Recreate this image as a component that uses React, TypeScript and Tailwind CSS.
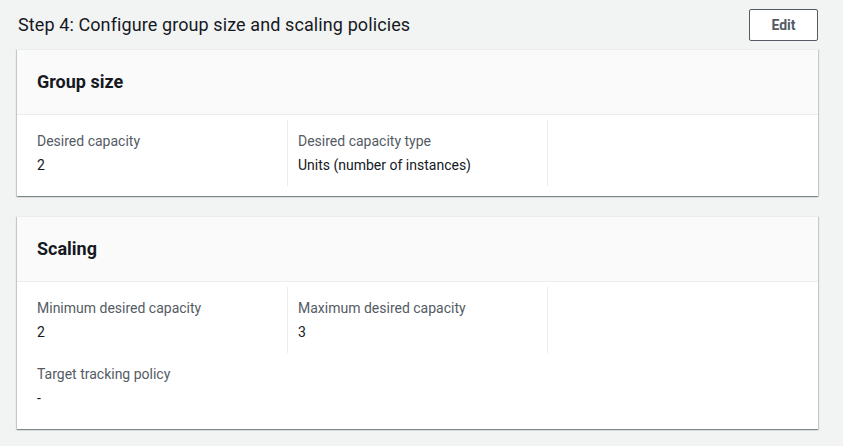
const fieldLabel = "text-[14px] leading-[24px] text-[#545b64]";
const fieldValue = "text-[14px] leading-[24px] text-[#16191f]";

function Field({ label, value, className }: { label: string; value: string; className?: string }) {
  return (
    <div className={`py-[9px] ${className ?? ""}`}>
      <div className={fieldLabel}>{label}</div>
      <div className={fieldValue}>{value}</div>
    </div>
  );
}

function Card({ title, children }: { title: string; children: React.ReactNode }) {
  return (
    <div className="bg-white border-t border-[#eaeded] shadow-[0_1px_1px_0_rgba(0,28,36,0.3),1px_1px_1px_0_rgba(0,28,36,0.15),-1px_1px_1px_0_rgba(0,28,36,0.15)]">
      <div className="bg-[#fafafa] border-b border-[#eaeded] px-[20px] py-[21px]">
        <h2 className="text-[18px] leading-[22px] font-bold text-[#16191f]">{title}</h2>
      </div>
      <div className="px-[20px] pt-[5px] pb-[10px]">{children}</div>
    </div>
  );
}

export default function App() {
  return (
    <div
      className="min-h-screen bg-[#f2f3f3] pl-[17px] pr-[25px] pt-[9px] pb-[16px]"
      style={{ fontFamily: "Roboto, 'Liberation Sans', sans-serif" }}
    >
      {/* Step header */}
      <div className="flex items-center justify-between mb-[8px]">
        <h1 className="pl-[1px] text-[18px] leading-[32px] tracking-[0.1px] text-[#16191f]">
          Step 4: Configure group size and scaling policies
        </h1>
        <button className="h-[32px] w-[69px] border border-[#545b64] rounded-[2px] bg-white text-[14px] font-bold text-[#545b64]">
          Edit
        </button>
      </div>

      <div className="flex flex-col gap-[20px]">
        <Card title="Group size">
          <div className="grid grid-cols-[251px_260px_1fr]">
            <Field label="Desired capacity" value="2" className="border-r border-[#eaeded]" />
            <Field label="Desired capacity type" value="Units (number of instances)" className="pl-[10px] border-r border-[#eaeded]" />
            <div />
          </div>
        </Card>

        <Card title="Scaling">
          <div className="grid grid-cols-[251px_260px_1fr]">
            <Field label="Minimum desired capacity" value="2" className="border-r border-[#eaeded]" />
            <Field label="Maximum desired capacity" value="3" className="pl-[10px] border-r border-[#eaeded]" />
            <div />
          </div>
          <Field label="Target tracking policy" value="-" />
        </Card>
      </div>
    </div>
  );
}
